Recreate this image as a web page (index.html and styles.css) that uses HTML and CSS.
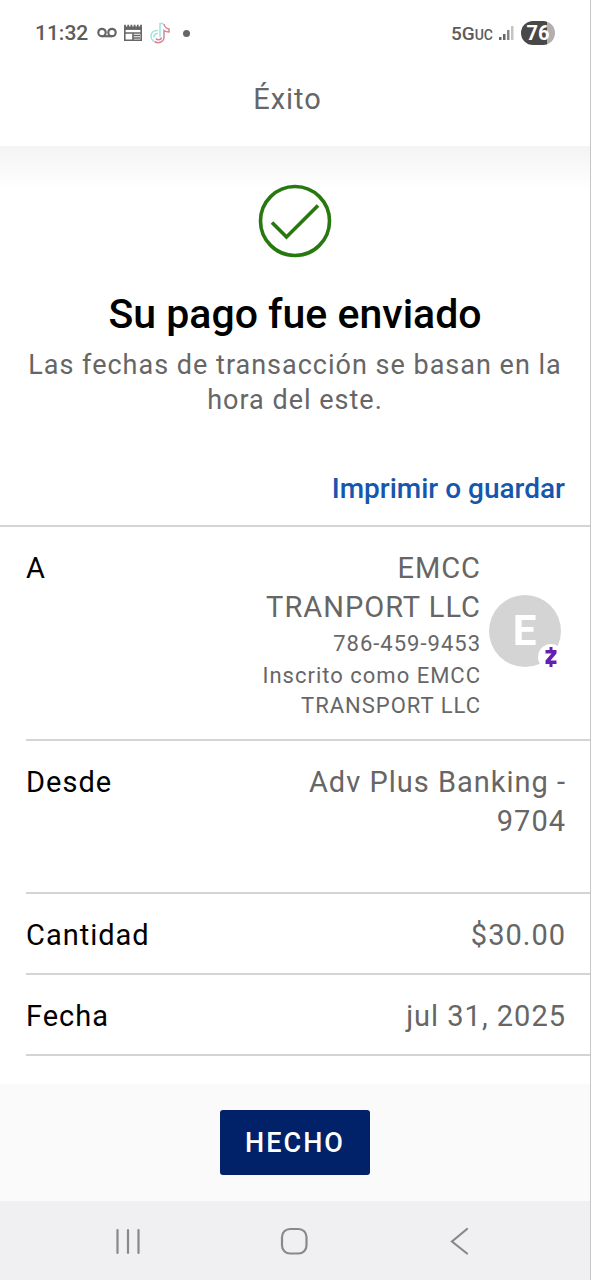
FILE: index.html
```html
<!DOCTYPE html>
<html lang="es">
<head>
<meta charset="utf-8">
<meta name="viewport" content="width=device-width, initial-scale=1">
<title>Éxito</title>
<link rel="stylesheet" href="styles.css">
</head>
<body>
<div class="screen">
  <div class="status">
    <div class="status-group">
      <span class="clock">11:32</span>
      <svg class="status-icon" width="20" height="20" viewBox="0 0 20 20" fill="none" stroke="#666" stroke-width="2.2"><circle cx="5" cy="9.500" r="3.700"/><circle cx="15" cy="9.500" r="3.700"/><path d="M5 13.200h10"/></svg>
      <svg class="status-icon" width="20" height="20" viewBox="0 0 20 20" fill="none" stroke="#666" stroke-width="1.6"><path d="M1.8 5v12.200h16.400V5"/><path d="M1 5.200h18" stroke-width="3.400"/><path d="M2 1.800v2.500M5.200 1.800v2.500M8.400 1.800v2.500M11.600 1.800v2.500M14.800 1.800v2.500M18 1.800v2.500" stroke-width="1.800"/><path d="M2 10h16M10.500 12.500H17M10.500 15H17M10 9.500v7.500"/></svg>
      <svg class="status-icon" width="22" height="22" viewBox="0 0 22 22" fill="none" stroke-width="1.500"><path stroke="#9fe3e2" d="M9 8.500C4.500 8 1.500 11 2 15c.5 3 2 4 3 4.500M11 15V1.500h3.500M9 11.500c-2.500-.5-4.500 1.500-4 4"/><path stroke="#d58598" d="M15 2c.5 3 2 4.500 5 5v3c-2 0-3.500-.5-5-1.500V15c0 5-5.500 7-9.500 4.500M12.500 15.500c-.5 2.500-4 3-5.500 1"/></svg>
      <span class="dot"></span>
    </div>
    <div class="status-group status-right">
      <span class="network">5G<small>UC</small></span>
      <svg class="signal" width="16" height="16" viewBox="0 0 16 16"><path fill="#666" d="M1 12h2.500v3H1zM5 9h2.500v6H5z"/><path fill="#888" d="M9 5h2.500v10H9z"/><path fill="#c4c4c4" d="M13 1h2.500v14H13z"/></svg>
      <span class="battery">76</span>
    </div>
  </div>
  <header class="appbar"><h1>Éxito</h1></header>
  <main class="content">
    <section class="hero">
      <svg class="check" width="74" height="74" viewBox="0 0 74 74" fill="none" stroke="#26780f" stroke-width="3.600"><circle cx="37" cy="37" r="34.500"/><path d="M14 38.500L28.500 53L60 21.500"/></svg>
      <h2>Su pago fue enviado</h2>
      <p>Las fechas de transacción se basan en la hora del este.</p>
    </section>
    <div class="actions"><a href="#">Imprimir o guardar</a></div>
    <dl class="details">
      <div class="row">
        <dt>A</dt>
        <dd class="payee">
          <div class="payee-text">
            <div class="payee-name">EMCC TRANPORT LLC</div>
            <div class="payee-phone">786-459-9453</div>
            <div class="payee-note">Inscrito como EMCC TRANSPORT LLC</div>
          </div>
          <div class="avatar">E
            <span class="badge"><svg width="14" height="20" viewBox="0 0 14 20" fill="#6420b4"><path d="M5.500 0h3v3H12.500v3.500L6.500 13.500H12.500V17H8.500v3h-3v-3H1.500v-3.500l6-7H1.500V3h4z"/></svg></span>
          </div>
        </dd>
      </div>
      <div class="row row-account"><dt>Desde</dt><dd class="account">Adv Plus Banking - 9704</dd></div>
      <div class="row"><dt>Cantidad</dt><dd>$30.00</dd></div>
      <div class="row"><dt>Fecha</dt><dd>jul 31, 2025</dd></div>
    </dl>
  </main>
  <footer class="footer"><button class="done" type="button">HECHO</button></footer>
  <nav class="sysnav">
    <button type="button" aria-label="Recientes"><svg width="28" height="28" viewBox="0 0 28 28"><path d="M3.500 3v23M14 3v23M24.500 3v23"/></svg></button>
    <button type="button" aria-label="Inicio"><svg width="28" height="28" viewBox="0 0 28 28"><rect x="2" y="2" width="24.500" height="24.500" rx="8"/></svg></button>
    <button type="button" aria-label="Atrás"><svg width="28" height="28" viewBox="0 0 28 28"><path d="M21 2L6 14.500L21 26.500"/></svg></button>
  </nav>
</div>
</body>
</html>
```
FILE: styles.css
```css
* { box-sizing: border-box; }
body { margin: 0; background: #fff; font-family: Roboto, "Liberation Sans", sans-serif; color: #000; }
h1, h2, p, dl, dd { margin: 0; }
.screen { display: flex; flex-direction: column; min-height: 100vh; border-right: 1px solid #c6c6c6; }

.status { display: flex; justify-content: space-between; align-items: center; height: 66px; padding: 0 35px; color: #5c5c5c; font-weight: 500; }
.status-group { display: flex; align-items: center; gap: 6px; }
.clock { margin-right: 3px; font-size: 21px; }
.dot { width: 7px; height: 7px; margin-left: 6px; border-radius: 50%; background: #666; }
.status-right { gap: 5px; }
.network { font-size: 19px; }
.network small { font-size: 14px; }
.battery { width: 34px; height: 24px; margin-left: 2px; border-radius: 12px; background: linear-gradient(to right, #484848 76%, #b0b0b0 76%); color: #fff; font-size: 20px; font-weight: 700; line-height: 24px; text-align: center; }

.appbar { height: 80px; padding: 13px 15px 0 0; text-align: center; }
.appbar h1 { color: #666; font-size: 29px; font-weight: 400; line-height: 40px; letter-spacing: 1px; }

.content { flex: 1; background: linear-gradient(#f4f4f4, #fff 44px); }
.hero { display: flex; flex-direction: column; align-items: center; padding: 38px 24px 0; text-align: center; }
.hero h2 { margin-top: 30px; font-size: 41px; font-weight: 500; line-height: 52px; }
.hero p { margin-top: 8px; color: #666; font-size: 27px; line-height: 35px; letter-spacing: 1px; }
.actions { padding: 52px 25px 17px; border-bottom: 2px solid #d4d4d4; text-align: right; }
.actions a { color: #1656ad; font-size: 28px; font-weight: 500; line-height: 38px; text-decoration: none; }

.details { padding-left: 26px; font-size: 29px; line-height: 39px; letter-spacing: 1px; }
.row { display: flex; justify-content: space-between; padding: 22px 24px 18px 0; border-bottom: 2px solid #d4d4d4; }
.row dd { color: #666; text-align: right; }
.row-account { padding-bottom: 51px; }
.account { max-width: 270px; }
.payee { display: flex; align-items: flex-start; gap: 8px; margin-right: 5px; }
.payee-text { width: 224px; }
.payee-phone { font-size: 22px; line-height: 34px; }
.payee-note { font-size: 22px; line-height: 30px; }
.avatar { position: relative; width: 72px; height: 72px; margin-top: 46px; border-radius: 50%; background: #d4d4d4; color: #fff; font-size: 42px; font-weight: 700; line-height: 72px; text-align: center; }
.badge { position: absolute; right: -3px; bottom: -3px; display: flex; align-items: center; justify-content: center; width: 26px; height: 26px; border-radius: 50%; background: #fff; }

.footer { display: flex; justify-content: center; padding: 26px; background: #fafafa; }
.done { padding: 14px 25px 12px; border: 0; border-radius: 3px; background: #012169; color: #fff; font: 500 27px/39px Roboto, "Liberation Sans", sans-serif; letter-spacing: 2px; }
.sysnav { display: flex; justify-content: space-around; align-items: center; height: 79px; padding: 0 47px 0 45px; background: #f0f0f2; }
.sysnav button { display: flex; padding: 0; border: 0; background: none; }
.sysnav svg { fill: none; stroke: #898989; stroke-width: 2.200; stroke-linecap: round; }
```
